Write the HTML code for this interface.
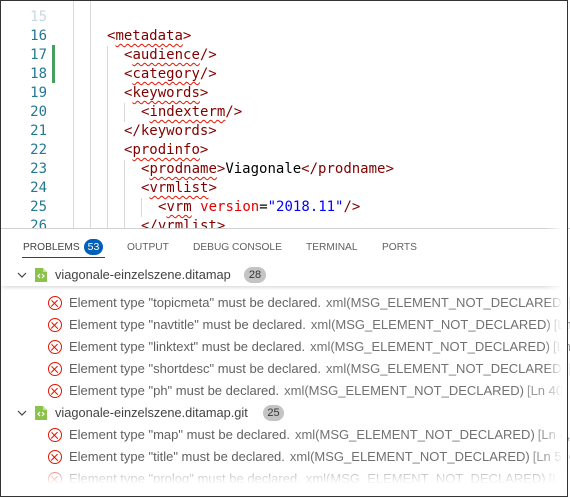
<!DOCTYPE html>
<html><head><meta charset="utf-8"><style>
*{margin:0;padding:0;box-sizing:border-box}
body{width:570px;height:498px;background:#fff;position:relative;overflow:hidden;font-family:"Liberation Sans",sans-serif}
.frame{position:absolute;left:0;top:0;width:568px;height:497px;border:1.5px solid #333;border-left-width:1.5px;}
.ln{position:absolute;left:0;width:47px;text-align:right;font:14px/19px "DejaVu Sans Mono",monospace;color:#237893}
.code{position:absolute;font:14px/19px "DejaVu Sans Mono",monospace;color:#800000;white-space:pre}
.sq{text-decoration:underline wavy #e51400;text-decoration-thickness:1px;text-underline-offset:3px}
.g{position:absolute;width:1px;background:#d8d8d8}
.t{color:#000}.a{color:#e50000}.s{color:#0000ff}
.tab{position:absolute;top:242px;font-size:10.2px;color:#616161}
.row{position:absolute;left:0;width:566px;height:22px;font-size:13px;line-height:22px;color:#616161;white-space:nowrap}
.err{position:absolute;left:48px;top:4px;width:14px;height:14px;border:1.3px solid #e51400;border-radius:50%}
.err:before,.err:after{content:"";position:absolute;left:5.2px;top:1.5px;width:1.3px;height:8.5px;background:#e51400;transform:rotate(45deg)}
.err:after{transform:rotate(-45deg)}
.msg{position:absolute;left:69px}
.src{color:#717171;margin-left:5px}
.pos{color:#9a9a9a;margin-left:3px}
</style></head><body>
<!-- editor -->
<div class="ln" style="top:8px;color:#c8d8e0">15</div>
<div class="ln" style="top:27px">16</div>
<div class="ln" style="top:46px">17</div>
<div class="ln" style="top:65px">18</div>
<div class="ln" style="top:84px">19</div>
<div class="ln" style="top:103px">20</div>
<div class="ln" style="top:122px">21</div>
<div class="ln" style="top:141px">22</div>
<div class="ln" style="top:160px">23</div>
<div class="ln" style="top:179px">24</div>
<div class="ln" style="top:198px">25</div>
<div class="ln" style="top:217px">26</div>
<div style="position:absolute;left:52px;top:45px;width:3px;height:38px;background:#489e5c"></div>
<div class="g" style="left:73px;top:0;height:229px"></div>
<div class="g" style="left:90px;top:0;height:229px"></div>
<div class="g" style="left:107px;top:46px;height:183px"></div>
<div class="g" style="left:124px;top:103px;height:19px"></div>
<div class="g" style="left:124px;top:160px;height:69px"></div>
<div class="g" style="left:141px;top:198px;height:19px"></div>
<div class="code" style="left:107px;top:27px">&lt;<span class="sq">metadata</span>&gt;</div>
<div class="code" style="left:124px;top:46px">&lt;<span class="sq">audience</span>/&gt;</div>
<div class="code" style="left:124px;top:65px">&lt;<span class="sq">category</span>/&gt;</div>
<div class="code" style="left:124px;top:84px">&lt;<span class="sq">keywords</span>&gt;</div>
<div class="code" style="left:141px;top:103px">&lt;<span class="sq">indexterm</span>/&gt;</div>
<div class="code" style="left:124px;top:122px">&lt;/keywords&gt;</div>
<div class="code" style="left:124px;top:141px">&lt;<span class="sq">prodinfo</span>&gt;</div>
<div class="code" style="left:141px;top:160px">&lt;<span class="sq">prodname</span>&gt;<span class="t">Viagonale</span>&lt;/prodname&gt;</div>
<div class="code" style="left:141px;top:179px">&lt;<span class="sq">vrmlist</span>&gt;</div>
<div class="code" style="left:158px;top:198px">&lt;<span class="sq">vrm</span> <span class="a">version</span><span class="t">=</span><span class="s">"2018.11"</span>/&gt;</div>
<div class="code" style="left:141px;top:217px">&lt;/vrmlist&gt;</div>
<div style="position:absolute;left:0;top:228px;width:570px;height:270px;background:#fff;border-top:1px solid #d0d0d0"></div>
<!-- tabs -->
<div class="tab" style="left:23px;color:#424242">PROBLEMS</div>
<div style="position:absolute;left:84px;top:239px;width:19px;height:16px;border-radius:8px;background:#005fb8;color:#fff;font-size:10.5px;line-height:16px;text-align:center">53</div>
<div style="position:absolute;left:22px;top:257px;width:83px;height:1px;background:#424242"></div>
<div class="tab" style="left:127px">OUTPUT</div>
<div class="tab" style="left:193px">DEBUG CONSOLE</div>
<div class="tab" style="left:306px">TERMINAL</div>
<div class="tab" style="left:382px">PORTS</div>
<!-- rows -->
<div class="row" style="top:292px"><span class="err"></span><span class="msg">Element type "topicmeta" must be declared.<span class="src">xml(MSG_ELEMENT_NOT_DECLARED)</span><span class="pos">[Ln 3</span></span></div>
<div class="row" style="top:314px"><span class="err"></span><span class="msg">Element type "navtitle" must be declared.<span class="src">xml(MSG_ELEMENT_NOT_DECLARED)</span><span class="pos">[Ln 1</span></span></div>
<div class="row" style="top:336px"><span class="err"></span><span class="msg">Element type "linktext" must be declared.<span class="src">xml(MSG_ELEMENT_NOT_DECLARED)</span><span class="pos">[Ln 1</span></span></div>
<div class="row" style="top:358px"><span class="err"></span><span class="msg">Element type "shortdesc" must be declared.<span class="src">xml(MSG_ELEMENT_NOT_DECLARED)</span><span class="pos">[Ln</span></span></div>
<div class="row" style="top:380px"><span class="err"></span><span class="msg">Element type "ph" must be declared.<span class="src">xml(MSG_ELEMENT_NOT_DECLARED)</span><span class="pos">[Ln 40, C</span></span></div>
<div class="row" style="top:402px"><svg style="position:absolute;left:17px;top:6px" width="10" height="10"><path d="M1 3l4 4 4-4" fill="none" stroke="#424242" stroke-width="1.2"/></svg>
<svg style="position:absolute;left:35px;top:4px" width="12" height="14"><path d="M0 0h8l4 4v10H0z" fill="#8bc34a"/><path d="M8 0v4h4" fill="#c5e1a5"/><path d="M5 6l-2 2 2 2M7 6l2 2-2 2" stroke="#fff" fill="none" stroke-width="1.2"/></svg>
<span style="position:absolute;left:55px;color:#424242;font-size:12.8px">viagonale-einzelszene.ditamap.git</span>
<span style="position:absolute;left:263px;top:3px;width:21px;height:16px;border-radius:8px;background:#c4c4c4;color:#333;font-size:11px;line-height:16px;text-align:center">25</span></div>
<div class="row" style="top:424px"><span class="err"></span><span class="msg">Element type "map" must be declared.<span class="src">xml(MSG_ELEMENT_NOT_DECLARED)</span><span class="pos">[Ln 4, C</span></span></div>
<div class="row" style="top:446px"><span class="err"></span><span class="msg">Element type "title" must be declared.<span class="src">xml(MSG_ELEMENT_NOT_DECLARED)</span><span class="pos">[Ln 5, C</span></span></div>
<div class="row" style="top:468px"><span class="err"></span><span class="msg">Element type "prolog" must be declared.<span class="src">xml(MSG_ELEMENT_NOT_DECLARED)</span><span class="pos">[Ln</span></span></div>
<div style="position:absolute;left:0;top:466px;width:570px;height:30px;background:linear-gradient(rgba(255,255,255,0.3),#fff 60%)"></div>
<!-- sticky header -->
<div class="row" style="top:264px;background:#fff;box-shadow:0 3px 4px -2px rgba(0,0,0,0.18)"><svg style="position:absolute;left:17px;top:6px" width="10" height="10"><path d="M1 3l4 4 4-4" fill="none" stroke="#424242" stroke-width="1.2"/></svg>
<svg style="position:absolute;left:35px;top:4px" width="12" height="14"><path d="M0 0h8l4 4v10H0z" fill="#8bc34a"/><path d="M8 0v4h4" fill="#c5e1a5"/><path d="M5 6l-2 2 2 2M7 6l2 2-2 2" stroke="#fff" fill="none" stroke-width="1.2"/></svg>
<span style="position:absolute;left:55px;color:#424242;font-size:12.8px">viagonale-einzelszene.ditamap</span>
<span style="position:absolute;left:244px;top:3px;width:22px;height:16px;border-radius:8px;background:#c4c4c4;color:#333;font-size:11px;line-height:16px;text-align:center">28</span></div>
<div style="position:absolute;left:545px;top:0;width:22px;height:498px;background:linear-gradient(90deg,rgba(255,255,255,0),#fff 80%)"></div>
<div class="frame"></div>
</body></html>
